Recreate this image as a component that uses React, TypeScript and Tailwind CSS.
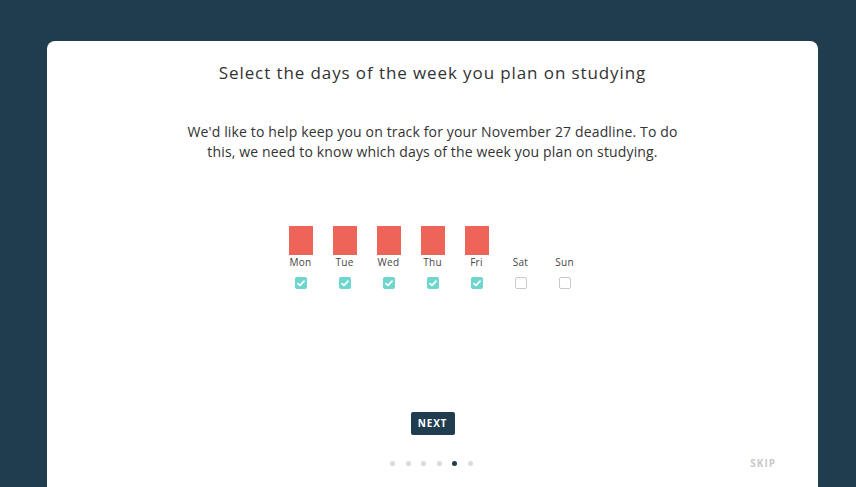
import React from "react";

const DAYS = [
  { label: "Mon", on: true },
  { label: "Tue", on: true },
  { label: "Wed", on: true },
  { label: "Thu", on: true },
  { label: "Fri", on: true },
  { label: "Sat", on: false },
  { label: "Sun", on: false },
];

function Check({ on }: { on: boolean }) {
  if (!on) {
    return <div className="w-[12px] h-[12px] rounded-[2px] border border-[#c9c9c9] bg-white" />;
  }
  return (
    <div className="w-[12px] h-[12px] rounded-[2px] bg-[#6dd7cd] flex items-center justify-center">
      <svg width="8" height="7" viewBox="0 0 8 7" fill="none" aria-hidden>
        <path d="M1 3.6 L3 5.4 L7 1.2" stroke="white" strokeWidth="1.8" strokeLinecap="round" strokeLinejoin="round" />
      </svg>
    </div>
  );
}

export default function App() {
  return (
    <div
      className="w-[856px] h-[487px] overflow-hidden bg-[#1f3d4e] pt-[41px]"
      style={{ fontFamily: '"Open Sans", "Noto Sans", sans-serif' }}
    >
      <div className="ml-[47px] w-[771px] h-[480px] bg-white rounded-t-[8px] flex flex-col items-center pt-[20px] relative">
        {/* Title */}
        <h1 className="text-[17px] leading-[24px] tracking-[0.9px] text-[#333]">
          Select the days of the week you plan on studying
        </h1>

        {/* Intro */}
        <p className="mt-[37px] w-[500px] text-center text-[14px] leading-[20px] tracking-[0.15px] text-[#333]">
          We'd like to help keep you on track for your November 27 deadline. To do this, we need to know which days of the week you plan on studying.
        </p>

        {/* Days */}
        <div className="mt-[64px] flex">
          {DAYS.map((d) => (
            <div key={d.label} className="w-[44px] flex flex-col items-center">
              <div className={d.on ? "w-[24px] h-[29px] bg-[#ee6458]" : "w-[24px] h-[29px]"} />
              <span className="mt-[1px] text-[10px] leading-[12px] tracking-[0.3px] text-[#444]">{d.label}</span>
              <div className="mt-[9px]">
                <Check on={d.on} />
              </div>
            </div>
          ))}
        </div>

        {/* Next */}
        <button className="mt-[123px] w-[44px] h-[23px] rounded-[2px] bg-[#1f3d4e] text-white text-[10px] font-bold tracking-[0.8px] flex items-center justify-center">
          NEXT
        </button>

        {/* Pager */}
        <div className="mt-[26px] -ml-[2px] flex items-center gap-[10.6px]">
          {[0, 1, 2, 3, 4, 5].map((i) => (
            <span
              key={i}
              className={i === 4 ? "w-[5px] h-[5px] rounded-full bg-[#1f3d4e]" : "w-[5px] h-[5px] rounded-full bg-[#d8dcdf]"}
            />
          ))}
        </div>

        <span className="absolute right-[42px] top-[416px] text-[10px] leading-[12px] font-bold tracking-[1px] text-[#c8c8c8]">
          SKIP
        </span>
      </div>
    </div>
  );
}
